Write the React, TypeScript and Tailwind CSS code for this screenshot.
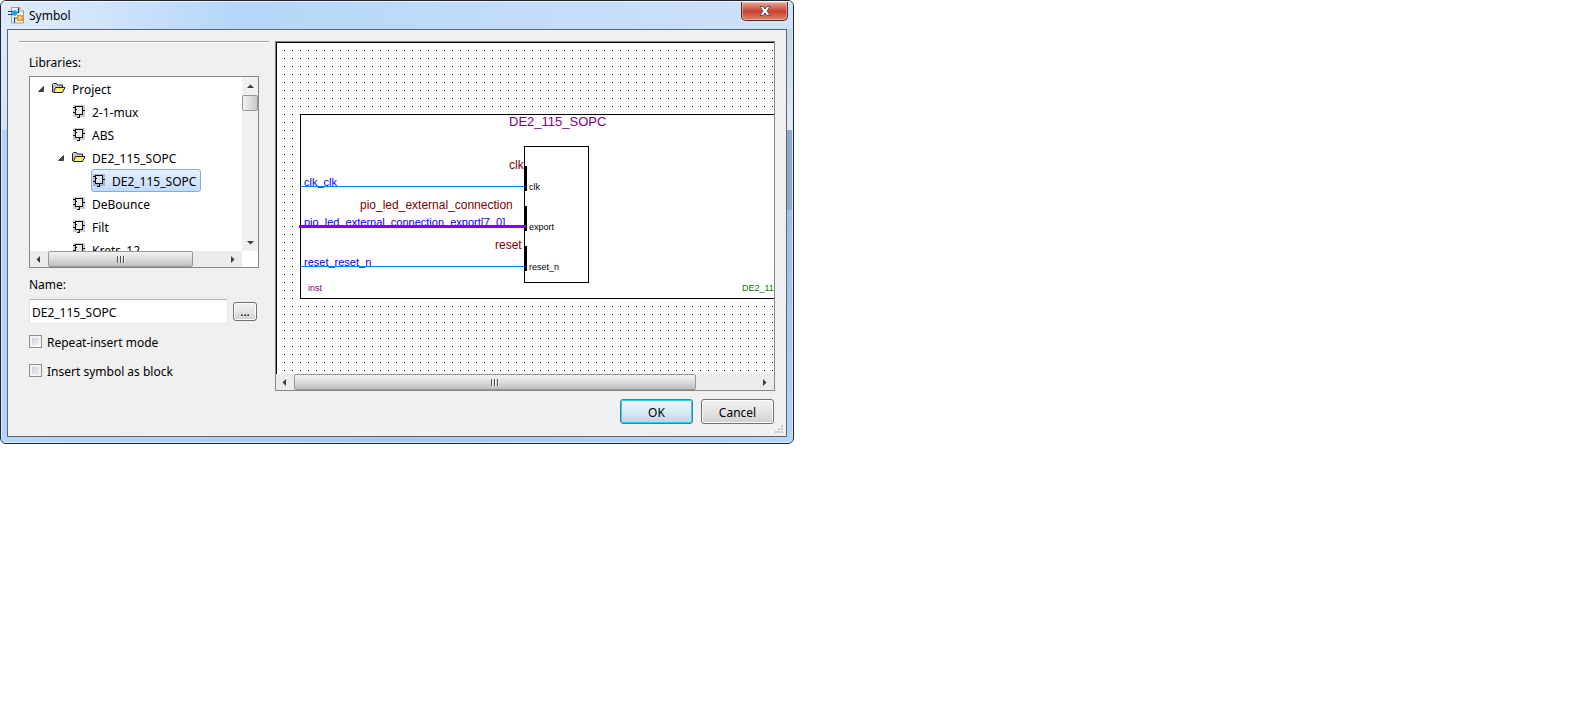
import type { ReactNode } from "react";

function AppIcon() {
  return (
    <svg width="16" height="17" viewBox="0 0 16 17" aria-hidden="true">
      <path d="M3.5 0.500h8.500l3.500 3.500v12h-12z" fill="#f4f2ee" stroke="#a79b90" />
      <path d="M12 0.500v3.500h3.500" fill="#fff" stroke="#a79b90" />
      <path d="M0 4.500h5M0 7.500h5M8 5.500h2.500V1M6.500 15.500V11h3" stroke="#0b3f8c" strokeWidth="1.2" fill="none" />
      <circle cx="6.500" cy="6" r="2.800" fill="#12a5ee" />
      <rect x="9" y="8" width="6" height="6" fill="#f59a10" />
      <path d="M12 9.500v3M10.500 11h3" stroke="#fff" />
    </svg>
  );
}

function FolderIcon() {
  return (
    <svg width="14" height="11" viewBox="0 0 14 11" aria-hidden="true">
      <path d="M0.500 9V1.500l1-1h3l1 1.500h5v2.500" fill="#c9c9c4" stroke="#222" />
      <path d="M1.500 9.500L3.500 4.500h9.500L10.500 9.500z" fill="#f8f06a" stroke="#222" />
    </svg>
  );
}

function ChipIcon() {
  return (
    <svg width="12" height="13" viewBox="0 0 12 13" shapeRendering="crispEdges" aria-hidden="true">
      <rect x="0" y="0" width="12" height="12" fill="#000" opacity="0.2" />
      <rect x="2" y="1" width="7" height="9" fill="#fff" opacity="0.6" />
      <path d="M2.500 1.500h7v8h-7zM0 2.500h2M0 7.500h2M10 5.500h2M6.500 10v2M4 12.500h3M3 4.500h1" fill="none" stroke="#111" />
    </svg>
  );
}

function Expander() {
  return (
    <svg width="6" height="6" viewBox="0 0 6 6" aria-hidden="true">
      <path d="M5.500 0.500v5h-5z" fill="#4a4a4a" stroke="#262626" strokeWidth="0.8" />
    </svg>
  );
}

function Arrow({ d }: { d: string }) {
  return (
    <svg width="7" height="7" viewBox="0 0 7 7" aria-hidden="true">
      <path d={d} fill="#3c3c3c" />
    </svg>
  );
}

const LEFT = "M5 0v7L1.500 3.500z";
const RIGHT = "M2 0v7L5.500 3.500z";
const UP = "M0 5h7L3.500 1.500z";
const DOWN = "M0 2h7L3.500 5.500z";

function HScroll({ thumb }: { thumb: string }) {
  return (
    <div className="flex h-4 bg-[#ececec]">
      <button aria-label="Scroll left" className="flex w-[18px] shrink-0 items-center justify-center pr-0.5">
        <Arrow d={LEFT} />
      </button>
      <div className="flex min-w-0 flex-1">
        <div
          className={`flex items-center justify-center gap-px rounded-xs border border-[#979797] bg-linear-to-b from-[#f3f3f3] via-[#dcdcdc] via-50% to-[#c0c0c3] ${thumb}`}
        >
          <i className="h-[7px] w-0.5 border-r border-[#f4f4f4] bg-[#505050]" />
          <i className="h-[7px] w-0.5 border-r border-[#f4f4f4] bg-[#505050]" />
          <i className="h-[7px] w-0.5 border-r border-[#f4f4f4] bg-[#505050]" />
        </div>
      </div>
      <button aria-label="Scroll right" className="flex w-[18px] shrink-0 items-center justify-center pr-0.5">
        <Arrow d={RIGHT} />
      </button>
    </div>
  );
}

function FolderRow({ name, indent }: { name: string; indent: string }) {
  return (
    <li className={`flex h-[23px] items-center ${indent}`}>
      <Expander />
      <span className="ml-2 mr-1.5">
        <FolderIcon />
      </span>
      <span className="pt-0.5">{name}</span>
    </li>
  );
}

function SymbolRow({ name }: { name: string }) {
  return (
    <li className="flex h-[23px] items-center gap-[7px] pl-[43px]">
      <ChipIcon />
      <span className="pt-0.5">{name}</span>
    </li>
  );
}

function Tree() {
  return (
    <div className="flex h-[192px] flex-col border border-[#828790] bg-white">
      <div className="flex min-h-0 flex-1">
        <ul className="min-w-0 flex-1 overflow-hidden whitespace-nowrap">
          <FolderRow name="Project" indent="pl-2" />
          <SymbolRow name="2-1-mux" />
          <SymbolRow name="ABS" />
          <FolderRow name="DE2_115_SOPC" indent="pl-7" />
          <li className="flex h-[23px] pl-[61px]">
            <span className="flex items-center gap-[7px] rounded-[3px] border border-[#84acdd] bg-linear-to-b from-[#e5f0fc] to-[#c2dcfc] pl-px pr-1">
              <ChipIcon />
              <span className="pt-0.5">DE2_115_SOPC</span>
            </span>
          </li>
          <SymbolRow name="DeBounce" />
          <SymbolRow name="Filt" />
          <SymbolRow name="Krets_12" />
        </ul>
        <div className="flex w-4 flex-col bg-[#f0f0f0]">
          <button aria-label="Scroll up" className="flex h-[18px] items-center justify-center">
            <Arrow d={UP} />
          </button>
          <div className="flex-1">
            <div className="h-4 rounded-xs border border-[#979797] bg-linear-to-r from-[#f3f3f3] to-[#c8c8cb]" />
          </div>
          <button aria-label="Scroll down" className="flex h-[18px] items-center justify-center">
            <Arrow d={DOWN} />
          </button>
        </div>
      </div>
      <div className="flex">
        <div className="min-w-0 flex-1">
          <HScroll thumb="w-[145px]" />
        </div>
        <div className="w-4 bg-white" />
      </div>
    </div>
  );
}

function Schematic() {
  return (
    <svg className="block h-[332px] w-full bg-white font-['Liberation_Sans',Arial,sans-serif]" role="img" aria-label="DE2_115_SOPC symbol">
      <defs>
        <pattern id="grid" width="8" height="8" patternUnits="userSpaceOnUse">
          <rect width="1" height="1" fill="#000" />
        </pattern>
      </defs>
      <g shapeRendering="crispEdges">
        <rect x="7" y="7" width="100%" height="325" fill="url(#grid)" />
        <path d="M0 0.500H2000M0.500 0V332" stroke="#000" />
        <rect x="24.500" y="72.500" width="1200" height="184" fill="#fff" stroke="#000" />
        <rect x="248.500" y="104.500" width="64" height="136" fill="#fff" stroke="#000" />
        <path d="M250 124v25M250 164v25M250 204v25" stroke="#000" strokeWidth="2" />
      </g>
      <g fill="#0000ff" fontSize="11">
        <text x="28" y="144">clk_clk</text>
        <text x="28" y="184">pio_led_external_connection_export[7..0]</text>
        <text x="28" y="224">reset_reset_n</text>
      </g>
      <g shapeRendering="crispEdges">
        <path d="M24 144.500H248M24 224.500H248" stroke="#0080ff" />
        <path d="M23 184.500H250" stroke="#8000ff" strokeWidth="3" />
      </g>
      <g fill="#800000" fontSize="12">
        <text x="233" y="127">clk</text>
        <text x="84" y="167">pio_led_external_connection</text>
        <text x="219" y="207">reset</text>
      </g>
      <g fill="#000" fontSize="9">
        <text x="253" y="148">clk</text>
        <text x="253" y="188">export</text>
        <text x="253" y="228">reset_n</text>
      </g>
      <text x="233" y="84" fill="#800080" fontSize="13">DE2_115_SOPC</text>
      <text x="32" y="249" fill="#800080" fontSize="9">inst</text>
      <text x="466" y="249" fill="#008000" fontSize="9">DE2_115_SOPC</text>
    </svg>
  );
}

function Check({ children }: { children: ReactNode }) {
  return (
    <label className="flex h-[29px] items-center gap-[5px]">
      <input
        type="checkbox"
        className="size-[13px] appearance-none border border-[#8e8f8f] bg-linear-to-br from-[#c3c7cd] to-[#fbfbfb] shadow-[inset_0_0_0_2px_#f4f4f4] checked:bg-[#4b6a9b]"
      />
      <span className="pt-0.5">{children}</span>
    </label>
  );
}

function ResizeGrip() {
  return (
    <svg className="absolute bottom-0.5 right-0.5" width="9" height="9" viewBox="0 0 9 9" shapeRendering="crispEdges" aria-hidden="true">
      <path d="M6 0h2v2H6zM3 3h2v2H3zM6 3h2v2H6zM0 6h2v2H0zM3 6h2v2H3zM6 6h2v2H6z" fill="#c4c4c4" />
    </svg>
  );
}

export default function App() {
  return (
    <main className="min-h-screen bg-white font-['Noto_Sans',sans-serif] text-[12px] leading-4 text-black">
      <section
        aria-label="Symbol"
        className="flex w-full max-w-[794px] flex-col overflow-hidden rounded-md border border-[#20242c] bg-[#b0d0f4]"
      >
        <header className="flex h-7 justify-between border-t border-white/70 bg-linear-to-r from-[#dceafb] from-5% via-[#b5d6f9] via-30% to-[#cfe2f9] pl-[7px] pr-[5px]">
          <h1 className="flex items-center gap-[5px]">
            <AppIcon />
            Symbol
          </h1>
          <button
            aria-label="Close"
            className="flex h-[19px] w-[47px] items-center justify-center rounded-b-[5px] border border-t-0 border-[#5a2420] bg-linear-to-b from-[#e6a79b] from-0% via-[#c6402c] via-50% to-[#d9806a] shadow-[inset_0_0_0_1px_#ffffff60]"
          >
            <svg width="12" height="10" viewBox="0 0 12 10" aria-hidden="true">
              <path d="M1 0.500h3l2 2.500 2-2.500h3L8 5l3 4.500H8L6 7 4 9.500H1L4 5z" fill="#fff" stroke="#4f5468" />
            </svg>
          </button>
        </header>
        <div className="flex">
          <div className="flex w-1.5 shrink-0 flex-col border-l border-white/60">
            <div className="h-[101px] bg-linear-to-b from-[#dceafb] to-[#d3e3f6]" />
            <div className="flex-1 bg-[#b3d4f8]" />
          </div>
          <div className="relative flex min-w-0 flex-1 border border-[#5b6670] bg-[#f0f0f0] pb-3 pl-[11px] pt-[11px]">
            <div className="w-[250px] shrink-0 border-t border-[#a0a0a0] pl-2.5 pr-2.5 shadow-[inset_0_1px_0_#fff]">
              <h2 className="mt-[13px] h-[21px]">Libraries:</h2>
              <Tree />
              <label htmlFor="name" className="mt-[9px] flex h-[22px]">
                Name:
              </label>
              <div className="flex items-center justify-between pr-0.5">
                <input
                  id="name"
                  defaultValue="DE2_115_SOPC"
                  className="h-[25px] w-[199px] rounded-xs border border-[#e2e3ea] border-t-[#abadb3] bg-white px-0.5 pt-0.5"
                />
                <button
                  aria-label="Browse"
                  className="flex h-[19px] w-6 items-center justify-center rounded-[3px] border border-[#707070] bg-linear-to-b from-[#f2f2f2] via-[#e4e4e4] via-50% to-[#cfcfcf] shadow-[inset_0_0_0_1px_#fcfcfc]"
                >
                  ...
                </button>
              </div>
              <div className="mt-[3px]">
                <Check>Repeat-insert mode</Check>
                <Check>Insert symbol as block</Check>
              </div>
            </div>
            <div className="ml-1.5 mr-[11px] min-w-0 flex-1">
              <div className="overflow-hidden border border-[#828790]">
                <Schematic />
                <HScroll thumb="w-[87%]" />
              </div>
              <div className="mt-2 flex justify-end gap-2 pr-px">
                <button className="h-[25px] w-[73px] rounded-[3px] border border-[#3c7fb1] bg-linear-to-b from-[#eef5f9] via-[#dcebf3] via-50% to-[#b9d6e6] pt-0.5 shadow-[inset_0_0_0_1px_#33c8f5]">
                  OK
                </button>
                <button className="h-[25px] w-[73px] rounded-[3px] border border-[#707070] bg-linear-to-b from-[#f2f2f2] via-[#e4e4e4] via-50% to-[#cfcfcf] pt-0.5 shadow-[inset_0_0_0_1px_#fcfcfc]">
                  Cancel
                </button>
              </div>
            </div>
            <ResizeGrip />
          </div>
          <div className="flex w-1.5 shrink-0 flex-col border-r border-[#d5ecf8]">
            <div className="h-[101px] bg-linear-to-b from-[#c3d5ea] to-[#e3ebf5]" />
            <div className="h-20 bg-[#8faacc]" />
            <div className="flex-1 bg-linear-to-b from-[#9fc0e4] to-[#b3d4f8]" />
          </div>
        </div>
        <div className="h-1.5 border-b border-[#d5ecf8] bg-linear-to-r from-[#b5d6f9] via-[#a9c6ec] to-[#b5d6f9]" />
      </section>
    </main>
  );
}
